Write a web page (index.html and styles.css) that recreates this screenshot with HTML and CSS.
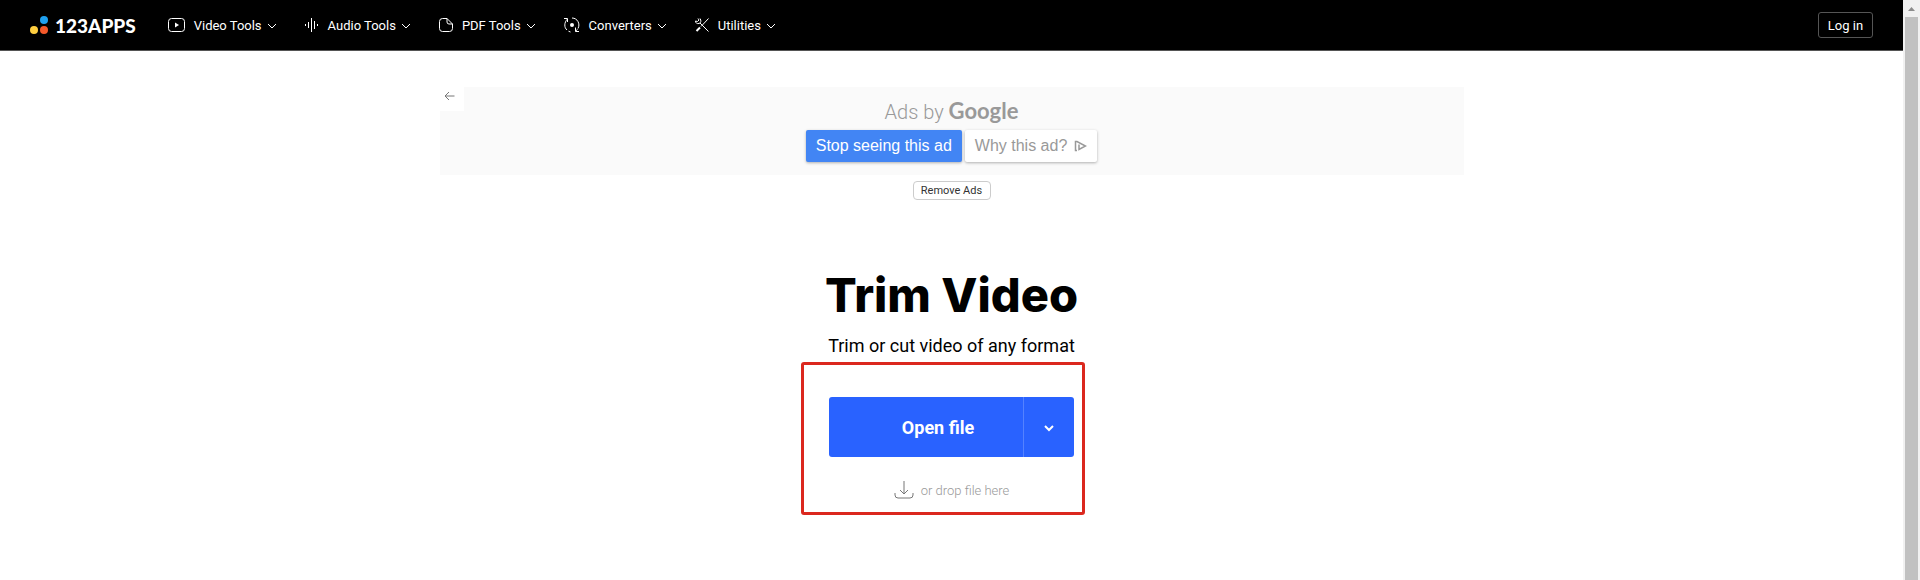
FILE: index.html
```html
<!DOCTYPE html>
<html lang="en">
<head>
    <meta charset="UTF-8">
    <meta name="viewport" content="width=device-width, initial-scale=1.0">
    <title>Trim Video</title>
    <link rel="stylesheet" href="styles.css">
</head>
<body>

<div class="page">
    <header class="header">
        <a href="#" class="logo">
            <svg width="18" height="18" viewBox="0 0 18 18">
                <circle cx="14" cy="4" r="4" fill="#1ea0f0"/>
                <circle cx="4" cy="14" r="4" fill="#ffcf40"/>
                <circle cx="14" cy="14" r="4" fill="#f4592a"/>
            </svg>
            <span>123APPS</span>
        </a>

        <nav class="nav">
            <a href="#" class="nav-item">
                <svg class="icon" width="17" height="16" viewBox="0 0 17 16"><rect x=".5" y="1.500" width="16" height="13" rx="3"/><path d="M7 5.500v5L11 8z" fill="#fff" stroke="none"/></svg>
                <span>Video Tools</span>
                <svg class="chevron" width="10" height="6" viewBox="0 0 10 6"><path d="M1 1l4 4 4-4"/></svg>
            </a>
            <a href="#" class="nav-item">
                <svg class="icon" width="14" height="16" viewBox="0 0 14 16"><path d="M.5 7v2M3.500 5v6M6.500 1v14M9.500 4v8M12.500 7v2"/></svg>
                <span>Audio Tools</span>
                <svg class="chevron" width="10" height="6" viewBox="0 0 10 6"><path d="M1 1l4 4 4-4"/></svg>
            </a>
            <a href="#" class="nav-item">
                <svg class="icon" width="14" height="16" viewBox="0 0 14 16"><path d="M8 1.500H3.500a3 3 0 0 0-3 3v7a3 3 0 0 0 3 3h7a3 3 0 0 0 3-3V7zM8 1.500V5a2 2 0 0 0 2 2h3.500"/></svg>
                <span>PDF Tools</span>
                <svg class="chevron" width="10" height="6" viewBox="0 0 10 6"><path d="M1 1l4 4 4-4"/></svg>
            </a>
            <a href="#" class="nav-item">
                <svg class="icon" width="16" height="16" viewBox="0 0 16 16"><path d="M0 1.500h3.500V5M3.500 2C0 5.500 0 10.500 3 13M4.500 14.200l2 .8M8 1c5.500 0 8.500 6 6 10.500M13.500 12.500L11.500 14M11.500 10.500v4H15"/><circle cx="8" cy="8" r="2" fill="#fff" stroke="none"/></svg>
                <span>Converters</span>
                <svg class="chevron" width="10" height="6" viewBox="0 0 10 6"><path d="M1 1l4 4 4-4"/></svg>
            </a>
            <a href="#" class="nav-item">
                <svg class="icon" width="14" height="16" viewBox="0 0 14 16"><path d="M.5 4c0 2 1.500 3 3.500 2.500S6.500 3.500 5 1.500M3 1.500L4 3 2.500 4.500.5 4M5 6l8.500 8.500M13.500 1.500L6 9.500"/><path d="M5 10.500l-3.500 3.500" stroke-width="2"/></svg>
                <span>Utilities</span>
                <svg class="chevron" width="10" height="6" viewBox="0 0 10 6"><path d="M1 1l4 4 4-4"/></svg>
            </a>
        </nav>

        <button type="button" class="login">Log in</button>
    </header>

    <main class="main">
        <!-- Ad slot -->
        <section class="ad">
            <button type="button" class="ad-back" aria-label="Back">
                <svg width="11" height="10" viewBox="0 0 11 10"><path d="M10.500 5H1M5 1L1 5l4 4"/></svg>
            </button>
            <p class="ad-title">Ads by <span class="google">Google</span></p>
            <div class="ad-buttons">
                <button type="button" class="ad-button ad-stop">Stop seeing this ad</button>
                <button type="button" class="ad-button ad-why">Why this ad?
                    <svg width="13" height="12" viewBox="0 0 13 12"><path d="M3 10.500H1.500v-9H3L11.500 6 5 9.500V4.500"/></svg>
                </button>
            </div>
        </section>
        <button type="button" class="remove-ads">Remove Ads</button>

        <h1>Trim Video</h1>
        <p class="subtitle">Trim or cut video of any format</p>

        <section class="picker">
            <div class="open-group">
                <button type="button" class="open-file">Open file</button>
                <button type="button" class="open-more" aria-label="More sources">
                    <svg width="12" height="8" viewBox="0 0 12 8"><path d="M2 2l4 4 4-4"/></svg>
                </button>
            </div>
            <div class="drop">
                <svg width="20" height="18" viewBox="0 0 20 18"><path d="M10 0v12.500M6 9l4 4 4-4M1 12v2a3 3 0 0 0 3 3h12a3 3 0 0 0 3-3v-2"/></svg>
                <span>or drop file here</span>
            </div>
            <div class="highlight"></div>
        </section>
    </main>
</div>

<div class="scrollbar">
    <svg width="7" height="4" viewBox="0 0 7 4"><path d="M0 4l3.500-4L7 4z" fill="#8c8c8c"/></svg>
    <div class="thumb"></div>
</div>

</body>
</html>
```
FILE: styles.css
```css
* {
    box-sizing: border-box;
}

body {
    margin: 0;
    min-height: 100vh;
    display: flex;
    background-color: #fff;
    color: #000;
    font-family: Roboto, Arial, sans-serif;
}

button {
    font-family: inherit;
    cursor: pointer;
}

svg {
    fill: none;
    flex-shrink: 0;
}

.page {
    flex: 1;
}

/* Header */
.header {
    height: 51px;
    padding: 0 30px;
    display: flex;
    align-items: center;
    background-color: #000;
    border-bottom: 1px solid #555;
}

.logo {
    display: flex;
    align-items: center;
    gap: 7px;
    color: #fff;
    font-family: Lato, sans-serif;
    font-size: 19px;
    font-weight: 900;
    text-decoration: none;
}

.nav {
    display: flex;
    gap: 28px;
    margin-left: 32px;
}

.nav-item {
    display: flex;
    align-items: center;
    color: #fff;
    font-size: 13px;
    text-decoration: none;
}

.icon {
    margin-right: 9px;
    stroke: #fff;
}

.chevron {
    margin: 2px 0 0 5px;
    stroke: #fff;
}

.login {
    width: 55px;
    height: 26px;
    margin-left: auto;
    padding: 0;
    border: 1px solid #555;
    border-radius: 3px;
    background-color: #000;
    color: #fff;
    font-size: 13px;
}

.main {
    display: flex;
    flex-direction: column;
    align-items: center;
    padding: 36px 20px;
}

/* Ad */
.ad {
    position: relative;
    width: 100%;
    max-width: 1024px;
    height: 88px;
    padding-top: 12px;
    background-color: #fafafa;
    font-family: "Liberation Sans", Arial, sans-serif;
    text-align: center;
}

.ad-back {
    position: absolute;
    top: 0;
    left: 0;
    width: 24px;
    height: 24px;
    padding: 0 4px 6px 0;
    border: none;
    background-color: #fff;
}

.ad-back svg {
    stroke: #777;
}

.ad-title {
    margin: 0 0 6px;
    color: #999;
    font-family: Roboto, Arial, sans-serif;
    font-size: 20px;
    font-weight: 300;
    line-height: 24px;
}

.google {
    font-family: Lato, sans-serif;
    font-size: 22px;
    font-weight: 700;
}

.ad-buttons {
    display: flex;
    justify-content: center;
    gap: 3px;
}

.ad-button {
    height: 32px;
    padding: 0 10px;
    border: none;
    border-radius: 2px;
    box-shadow: 0 1px 3px rgba(0, 0, 0, 0.3);
    font-size: 16px;
}

.ad-stop {
    background-color: #4285f4;
    color: #fff;
}

.ad-why {
    display: flex;
    align-items: center;
    gap: 7px;
    background-color: #fff;
    color: #999;
}

.ad-why svg {
    stroke: #999;
    stroke-width: 1.5;
}

.remove-ads {
    width: 78px;
    height: 19px;
    margin-top: 6px;
    padding: 0;
    border: 1px solid #ccc;
    border-radius: 4px;
    background-color: #fff;
    color: #333;
    font-size: 11px;
}

/* Tool */
h1 {
    margin: 65px 0 0;
    font-family: Inter, sans-serif;
    font-size: 47px;
    font-weight: 800;
    line-height: 60px;
}

.subtitle {
    margin: 9px 0 0;
    font-size: 18px;
    line-height: 24px;
}

.picker {
    position: relative;
    width: 245px;
    margin-top: 39px;
}

.open-group {
    display: flex;
    height: 60px;
}

.open-file,
.open-more {
    border: none;
    background-color: #2962ff;
    color: #fff;
}

.open-file {
    flex: 1;
    padding: 0 0 0 24px;
    border-radius: 3px 0 0 3px;
    font-size: 18px;
    font-weight: 700;
}

.open-more {
    width: 51px;
    padding: 0;
    border-left: 1px solid #5482ff;
    border-radius: 0 3px 3px 0;
}

.open-more svg {
    stroke: #fff;
    stroke-width: 2;
}

.drop {
    display: flex;
    align-items: center;
    justify-content: center;
    gap: 7px;
    margin-top: 24px;
    color: #999;
    font-size: 13px;
    font-weight: 300;
}

.drop svg {
    stroke: #777;
}

.highlight {
    position: absolute;
    top: -35px;
    right: -11px;
    bottom: -16px;
    left: -28px;
    border: 3px solid #db281e;
    border-radius: 3px;
    pointer-events: none;
}

/* Scrollbar */
.scrollbar {
    width: 17px;
    display: flex;
    flex-direction: column;
    align-items: center;
    gap: 6px;
    padding-top: 7px;
    background-color: #f1f1f1;
}

.thumb {
    flex: 1;
    width: 13px;
    background-color: #c1c1c1;
}
```
